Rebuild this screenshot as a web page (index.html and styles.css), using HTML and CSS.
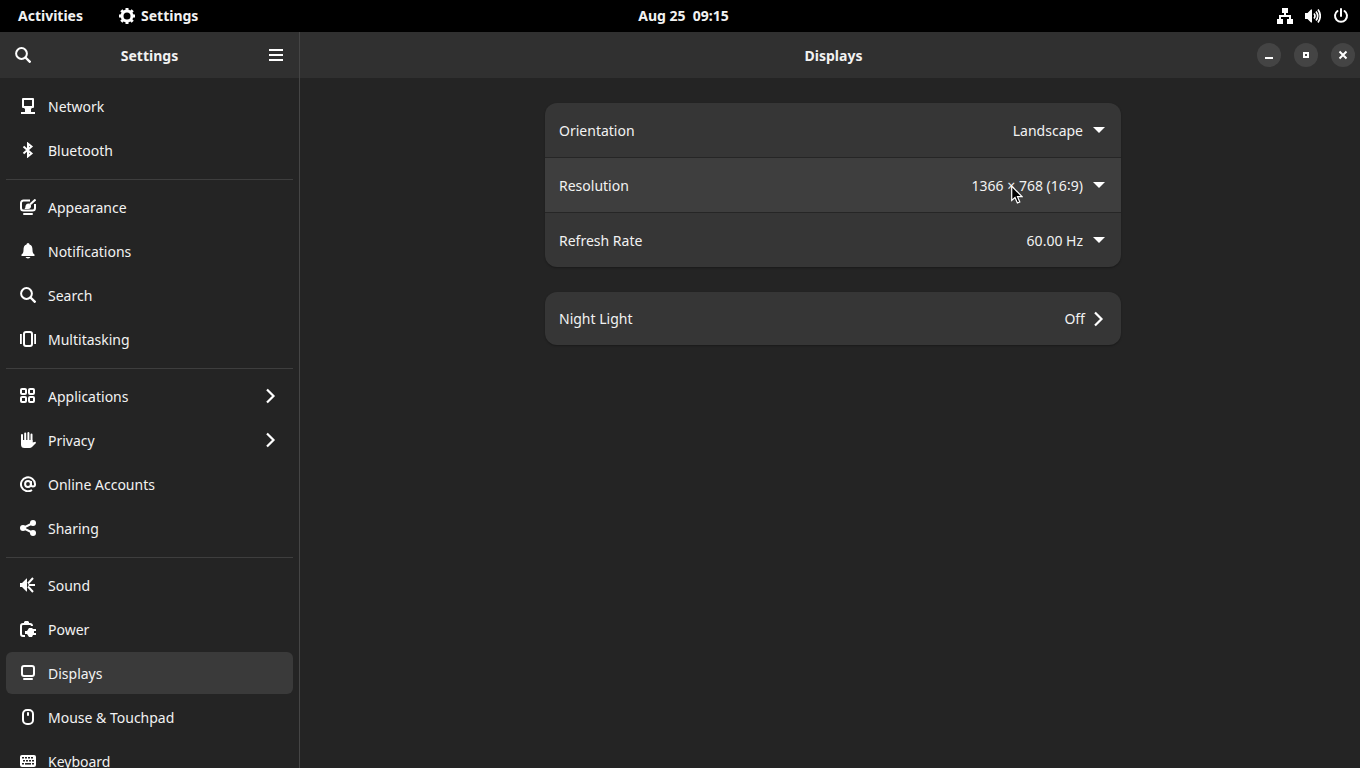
FILE: index.html
```html
<!DOCTYPE html>
<html lang="en">
<head>
    <meta charset="UTF-8">
    <title>Settings</title>
    <link rel="stylesheet" href="styles.css">
</head>
<body>
    <div class="topbar">
        <div class="topbar-left">
            <button class="topbar-item">Activities</button>
            <button class="topbar-item app-menu">
                <svg class="icon" viewBox="0 0 16 16"><circle cx="8" cy="8" r="5" fill="none" stroke="#fff" stroke-width="3"/><path d="M8 0v3M8 13v3M0 8h3M13 8h3M2.300 2.300l2.200 2.200M11.500 11.500l2.200 2.200M13.700 2.300l-2.200 2.200M4.500 11.500l-2.200 2.200" fill="none" stroke="#fff" stroke-width="3"/></svg>
                Settings
            </button>
        </div>
        <button class="topbar-item clock">Aug 25&nbsp; 09:15</button>
        <button class="topbar-item status" aria-label="System">
            <svg class="icon" viewBox="0 0 16 16"><path d="M5 0h6v5H9v2h5v4h2v5h-6v-5h2V9H4v2h2v5H0v-5h2V7h5V5H5z"/></svg>
            <svg class="icon" viewBox="0 0 16 16"><path d="M0 5h2.500L6 1.500h1v13H6L2.500 11H0z"/><path d="M9 5.500q2 2.500 0 5M11 3.500q3.400 4.500 0 9M13 1.500q4.500 6.500 0 13" fill="none" stroke="#fff" stroke-width="1.700"/></svg>
            <svg class="icon" viewBox="0 0 16 16"><path d="M4.500 3a6 6 0 1 0 7 0M8 1v7" fill="none" stroke="#fff" stroke-width="2" stroke-linecap="round"/></svg>
        </button>
    </div>

    <div class="window">
        <div class="sidebar">
            <div class="headerbar sidebar-header">
                <button class="header-button" aria-label="Search">
                    <svg class="icon" viewBox="0 0 16 16"><circle cx="6.500" cy="6.500" r="5.400" fill="none" stroke="#fff" stroke-width="2"/><path d="M10.500 10.500l5 5" stroke="#fff" stroke-width="2.400"/></svg>
                </button>
                <h1 class="title">Settings</h1>
                <button class="header-button" aria-label="Menu">
                    <svg class="icon" viewBox="0 0 16 16"><path d="M1 2h14v2H1zM1 7h14v2H1zM1 12h14v2H1z"/></svg>
                </button>
            </div>
            <nav class="nav">
                <a class="nav-item" href="#network">
                    <svg class="icon" viewBox="0 0 16 16"><path d="M3 1h10v8H3z" fill="none" stroke="#fff" stroke-width="2" stroke-linejoin="round"/><path d="M7 9h2v2h2v3h4v2H1v-2h4v-3h2zM4 10h8l-3 3H7z"/></svg>
                    <span>Network</span>
                </a>
                <a class="nav-item" href="#bluetooth">
                    <svg class="icon" viewBox="0 0 16 16"><path d="M3.500 4.500l8 7L8 14.300V1.700l3.500 2.800-8 7" fill="none" stroke="#fff" stroke-width="2"/></svg>
                    <span>Bluetooth</span>
                </a>
                <hr class="separator">
                <a class="nav-item" href="#appearance">
                    <svg class="icon" viewBox="0 0 16 16"><path d="M10 1.500H3.500A2.500 2.500 0 0 0 1 4v5a2.500 2.500 0 0 0 2.500 2.500h9A2.500 2.500 0 0 0 15 9V5" fill="none" stroke="#fff" stroke-width="2"/><path d="M4 14h8a1 1 0 0 1 0 2H4a1 1 0 0 1 0-2zM4.500 10q1-1 1-3a2.700 2.700 0 0 1 3.700-2.300l1.800 1.600Q11.500 10 8 10z"/><path d="M10 5.500L15.500.5" stroke="#fff" stroke-width="2"/></svg>
                    <span>Appearance</span>
                </a>
                <a class="nav-item" href="#notifications">
                    <svg class="icon" viewBox="0 0 16 16"><path d="M8 0a1.500 1.500 0 0 1 1.500 1.500C12 2.300 12.500 4.500 12.500 7c0 2.500.5 3.500 2 4.500V13h-13v-1.500c1.500-1 2-2 2-4.500 0-2.500.5-4.700 3-5.500A1.500 1.500 0 0 1 8 0zM5.500 14h5a2.600 2 0 0 1-5 0z"/></svg>
                    <span>Notifications</span>
                </a>
                <a class="nav-item" href="#search">
                    <svg class="icon" viewBox="0 0 16 16"><circle cx="6.500" cy="6.500" r="5.400" fill="none" stroke="#fff" stroke-width="2"/><path d="M10.500 10.500l5 5" stroke="#fff" stroke-width="2.400"/></svg>
                    <span>Search</span>
                </a>
                <a class="nav-item" href="#multitasking">
                    <svg class="icon" viewBox="0 0 16 16"><rect x="4" y="1" width="8" height="14" rx="2" fill="none" stroke="#fff" stroke-width="2"/><path d="M0 3h1.800v10H0zM14.200 3H16v10h-1.800z"/></svg>
                    <span>Multitasking</span>
                </a>
                <hr class="separator">
                <a class="nav-item" href="#applications">
                    <svg class="icon" viewBox="0 0 16 16"><g fill="none" stroke="#fff" stroke-width="2"><rect x="1" y="1" width="5" height="5" rx="1"/><rect x="9" y="1" width="5" height="5" rx="1"/><rect x="1" y="9" width="5" height="5" rx="1"/><rect x="9" y="9" width="5" height="5" rx="1"/></g></svg>
                    <span>Applications</span>
                    <svg class="icon chevron" viewBox="0 0 16 16"><path d="M4 1.500L10.500 8 4 14.500" fill="none" stroke="#fff" stroke-width="2.200"/></svg>
                </a>
                <a class="nav-item" href="#privacy">
                    <svg class="icon" viewBox="0 0 16 16"><path d="M2 3v8M5.200 1.500V11M8.400 1v10M11.500 2.500V11" stroke="#fff" stroke-width="2" stroke-linecap="round"/><path d="M1 8h11.500v2.500l3-.8.5 1.200-4 4q-1 1.100-2.500 1.100H4.500Q1 16 1 12.500z"/></svg>
                    <span>Privacy</span>
                    <svg class="icon chevron" viewBox="0 0 16 16"><path d="M4 1.500L10.500 8 4 14.500" fill="none" stroke="#fff" stroke-width="2.200"/></svg>
                </a>
                <a class="nav-item" href="#accounts">
                    <svg class="icon" viewBox="0 0 16 16"><path d="M12 14A7 7 0 1 1 15 8v.5a2 2 0 0 1-4 0V5" fill="none" stroke="#fff" stroke-width="2"/><circle cx="8" cy="8" r="2.900" fill="none" stroke="#fff" stroke-width="2"/></svg>
                    <span>Online Accounts</span>
                </a>
                <a class="nav-item" href="#sharing">
                    <svg class="icon" viewBox="0 0 16 16"><path d="M13 3L3 8l10 5" fill="none" stroke="#fff" stroke-width="2"/><circle cx="3" cy="8" r="3"/><circle cx="13" cy="3" r="3"/><circle cx="13" cy="13" r="3"/></svg>
                    <span>Sharing</span>
                </a>
                <hr class="separator">
                <a class="nav-item" href="#sound">
                    <svg class="icon" viewBox="0 0 16 16"><path d="M0 6h2l4.500-4.500h.5v13h-.5L2 10H0z"/><path d="M8 6.500L13 1M8.500 8H15M8 9.500l5 5.500" stroke="#fff" stroke-width="2"/></svg>
                    <span>Sound</span>
                </a>
                <a class="nav-item" href="#power">
                    <svg class="icon" viewBox="0 0 16 16"><path d="M4 1l1-1h3l1 1v1h1q3 0 3 3H11q0-1-1-1H3q-1 0-1 1v8q0 1 1 1h2v2H3q-3 0-3-3V5q0-3 3-3h1z"/><path d="M5 10h2l2-3h3l1 1h3v2h-2v2h2v2h-3l-1 2H9l-2-3H5z"/></svg>
                    <span>Power</span>
                </a>
                <a class="nav-item selected" href="#displays">
                    <svg class="icon" viewBox="0 0 16 16"><rect x="2" y="1" width="12" height="10" rx="2" fill="none" stroke="#fff" stroke-width="2"/><rect x="3" y="13" width="10" height="2" rx="1"/></svg>
                    <span>Displays</span>
                </a>
                <a class="nav-item" href="#mouse">
                    <svg class="icon" viewBox="0 0 16 16"><rect x="3" y="1" width="10" height="14" rx="4" fill="none" stroke="#fff" stroke-width="2"/><rect x="7" y="3" width="2" height="4" rx="1"/></svg>
                    <span>Mouse &amp; Touchpad</span>
                </a>
                <a class="nav-item" href="#keyboard">
                    <svg class="icon" viewBox="0 0 16 16"><rect y="2" width="16" height="12" rx="2"/><path d="M2 4.800h12M3 7.800h11M2 10.800h2M12 10.800h2" stroke="#242424" stroke-width="1.600" stroke-dasharray="2 1"/><path d="M5 10.800h6" stroke="#242424" stroke-width="1.600"/></svg>
                    <span>Keyboard</span>
                </a>
            </nav>
        </div>

        <div class="content">
            <div class="headerbar content-header">
                <h2 class="title">Displays</h2>
                <div class="window-controls">
                    <button class="window-button" aria-label="Minimize">
                        <svg class="icon" viewBox="0 0 16 16"><path d="M4 10h8v2H4z"/></svg>
                    </button>
                    <button class="window-button" aria-label="Maximize">
                        <svg class="icon" viewBox="0 0 16 16"><path d="M6 6h4v4H6z" fill="none" stroke="#fff" stroke-width="2"/></svg>
                    </button>
                    <button class="window-button" aria-label="Close">
                        <svg class="icon" viewBox="0 0 16 16"><path d="M4.500 4.500l7 7M11.500 4.500l-7 7" stroke="#fff" stroke-width="2"/></svg>
                    </button>
                </div>
            </div>
            <div class="panel">
                <div class="card">
                    <div class="row">
                        <label for="orientation">Orientation</label>
                        <select id="orientation"><option>Landscape</option></select>
                    </div>
                    <div class="row hover">
                        <label for="resolution">Resolution</label>
                        <select id="resolution"><option>1366 × 768 (16∶9)</option></select>
                        <svg class="pointer" viewBox="0 0 12 19"><path d="M.7 1v14.500l3.300-3 2.400 5.500 2.400-1-2.300-5.300H11z" fill="#000" stroke="#fff" stroke-width="1.200"/></svg>
                    </div>
                    <div class="row">
                        <label for="refresh">Refresh Rate</label>
                        <select id="refresh"><option>60.00 Hz</option></select>
                    </div>
                </div>
                <div class="card">
                    <button class="row">
                        <span>Night Light</span>
                        <span class="row-value">
                            <span>Off</span>
                            <svg class="icon" viewBox="0 0 16 16"><path d="M4 1.500L10.500 8 4 14.500" fill="none" stroke="#fff" stroke-width="2.200"/></svg>
                        </span>
                    </button>
                </div>
            </div>
        </div>
    </div>
</body>
</html>
```
FILE: styles.css
```css
*{
    margin: 0;
    padding: 0;
    box-sizing: border-box;
}
body{
    height: 100vh;
    display: flex;
    flex-direction: column;
    overflow: hidden;
    background: #242424;
    color: #f2f2f2;
    font-family: "Noto Sans", "Open Sans", sans-serif;
    font-size: 14px;
    line-height: 20px;
}
button, select{
    background: none;
    border: 0;
    color: inherit;
    font: inherit;
}
.icon{
    width: 16px;
    height: 16px;
    flex: none;
    fill: #fff;
}

/* top bar */
.topbar{
    height: 32px;
    flex: none;
    display: grid;
    grid-template-columns: 1fr auto 1fr;
    align-items: center;
    padding: 0 11px 0 18px;
    background: #000;
}
.topbar-left{
    display: flex;
    gap: 36px;
}
.topbar-item{
    display: flex;
    align-items: center;
    font-weight: 700;
}
.app-menu{
    gap: 6px;
}
.status{
    gap: 12px;
    justify-self: end;
}

/* window */
.window{
    flex: 1;
    min-height: 0;
    display: flex;
}
.headerbar{
    height: 46px;
    flex: none;
    display: grid;
    align-items: center;
    background: #303030;
}
.title{
    padding-top: 2px;
    font-size: 14px;
    font-weight: 700;
    line-height: 20px;
    text-align: center;
}

/* sidebar */
.sidebar{
    width: 300px;
    flex: none;
    display: flex;
    flex-direction: column;
    border-right: 1px solid #454545;
}
.sidebar-header{
    grid-template-columns: 32px 1fr 32px;
    padding: 0 7px;
}
.header-button{
    display: flex;
    align-items: center;
    justify-content: center;
    height: 32px;
}
.nav{
    flex: 1;
    min-height: 0;
    display: flex;
    flex-direction: column;
    padding: 6px;
    overflow: hidden;
}
.nav > *{
    flex: none;
}
.nav-item{
    display: flex;
    align-items: center;
    gap: 12px;
    height: 42px;
    margin: 1px 0;
    padding: 0 14px;
    border-radius: 6px;
    color: inherit;
    text-decoration: none;
}
.nav-item span{
    padding-top: 2px;
}
.nav-item.selected{
    background: #3a3a3a;
}
.chevron{
    margin-left: auto;
}
.separator{
    height: 1px;
    margin: 7px 0 5px;
    border: 0;
    background: #3e3e3e;
}

/* content */
.content{
    flex: 1;
    min-width: 0;
}
.content-header{
    grid-template-columns: 1fr auto 1fr;
    padding: 0 5px 0 12px;
}
.content-header .title{
    grid-column: 2;
}
.window-controls{
    display: flex;
    justify-content: flex-end;
    gap: 13px;
}
.window-button{
    display: flex;
    align-items: center;
    justify-content: center;
    width: 24px;
    height: 24px;
    border-radius: 50%;
    background: #444;
}
.panel{
    display: flex;
    flex-direction: column;
    align-items: center;
    gap: 25px;
    padding: 25px 12px 24px 18px;
}
.card{
    width: 100%;
    max-width: 576px;
    border-radius: 12px;
    background: #363636;
    box-shadow: 0 1px 2px rgba(0, 0, 0, .3);
    overflow: hidden;
}
.row{
    position: relative;
    display: flex;
    align-items: center;
    justify-content: space-between;
    width: 100%;
    height: 54px;
    padding: 0 14px;
}
.row + .row{
    height: 55px;
    border-top: 1px solid #262626;
}
button.row{
    height: 53px;
}
.row.hover{
    background: #3e3e3e;
}
.row-value{
    display: flex;
    align-items: center;
    gap: 6px;
}
.row label, .row select{
    padding-top: 2px;
}
.row select{
    appearance: none;
    padding-right: 24px;
    text-align-last: right;
}
/* drop-down arrow */
.row:has(select)::after{
    content: "";
    position: absolute;
    right: 16px;
    border: 6px solid transparent;
    border-top-color: #fff;
    border-bottom: 0;
}
.pointer{
    position: absolute;
    left: 466px;
    top: 27px;
    width: 12px;
    height: 19px;
}
```
